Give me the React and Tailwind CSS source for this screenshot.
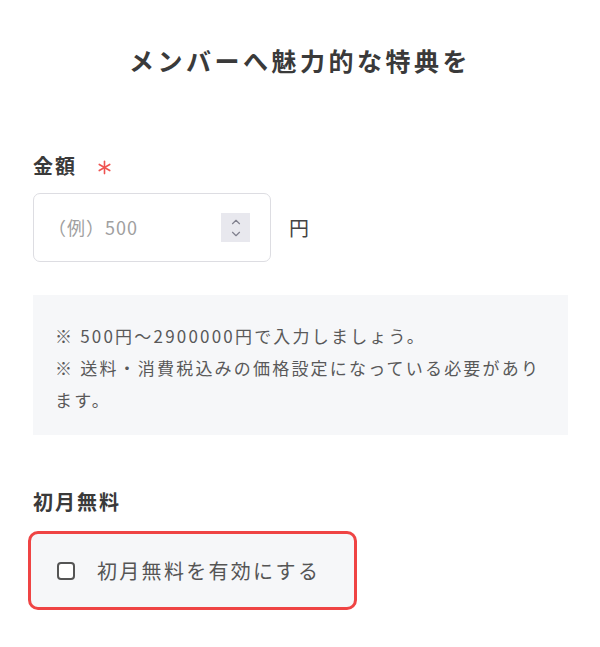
import { ChevronUp, ChevronDown } from "lucide-react";

const RequiredMark = () => (
  <svg viewBox="0 0 16 16" className="w-[15px] h-[15px]" fill="none" stroke="#ef5350" strokeWidth="1.7" strokeLinecap="round">
    <line x1="8" y1="1.5" x2="8" y2="14.5" />
    <line x1="2.4" y1="4.75" x2="13.6" y2="11.25" />
    <line x1="2.4" y1="11.25" x2="13.6" y2="4.75" />
  </svg>
);

const App = () => {
  return (
    <div className="min-h-screen bg-white px-[33px] pt-[44px] font-['Noto_Sans_CJK_JP','Noto_Sans',sans-serif]">
      {/**title */}
      <h1 className="text-center text-[25px] leading-[32px] font-bold tracking-[3.5px] text-[#3a3a3a]">
        メンバーへ魅力的な特典を
      </h1>

      {/**amount */}
      <section className="mt-[76px]">
        <div className="flex items-center h-[28px]">
          <span className="text-[20px] font-bold tracking-[2px] text-[#3a3a3a]">金額</span>
          <span className="ml-[20px] mt-[2px]">
            <RequiredMark />
          </span>
        </div>
        <div className="mt-[13px] flex items-center gap-[18px]">
          <div className="w-[238px] h-[69px] border border-[#dddde2] rounded-[7px] flex items-center justify-between pl-[14px] pr-[20px]">
            <span className="text-[18px] text-[#a0a0a0] tracking-[1px]">（例）500</span>
            <div className="w-[29px] h-[29px] bg-[#e8e8ee] flex flex-col items-center justify-center text-[#80808e]">
              <ChevronUp className="w-[14px] h-[14px] -mb-[1px]" strokeWidth={2} />
              <ChevronDown className="w-[14px] h-[14px] -mt-[1px]" strokeWidth={2} />
            </div>
          </div>
          <span className="text-[20px] text-[#444]">円</span>
        </div>
      </section>

      {/**notes */}
      <div className="mt-[33px] -mr-[1px] bg-[#f6f7f9] pl-[22px] pr-[22px] pt-[25px] pb-[19px] text-[17px] leading-[32px] tracking-[2.2px] text-[#595959]">
        <p>※ 500円〜2900000円で入力しましょう。</p>
        <p>※ 送料・消費税込みの価格設定になっている必要があります。</p>
      </div>

      {/**first month free */}
      <section className="mt-[53px]">
        <div className="h-[28px] flex items-center">
          <span className="text-[20px] font-bold tracking-[2px] text-[#3a3a3a]">初月無料</span>
        </div>
        <label className="mt-[15px] -ml-[5px] w-[329px] h-[79px] border-[3px] border-[#ef4444] rounded-[10px] bg-[#f6f7f9] flex items-center pl-[26px] cursor-pointer">
          <span className="w-[18px] h-[18px] border-2 border-[#555] rounded-[4px] bg-white" />
          <span className="ml-[22px] text-[20px] tracking-[2.3px] text-[#555]">初月無料を有効にする</span>
        </label>
      </section>
    </div>
  );
};

export default App;
